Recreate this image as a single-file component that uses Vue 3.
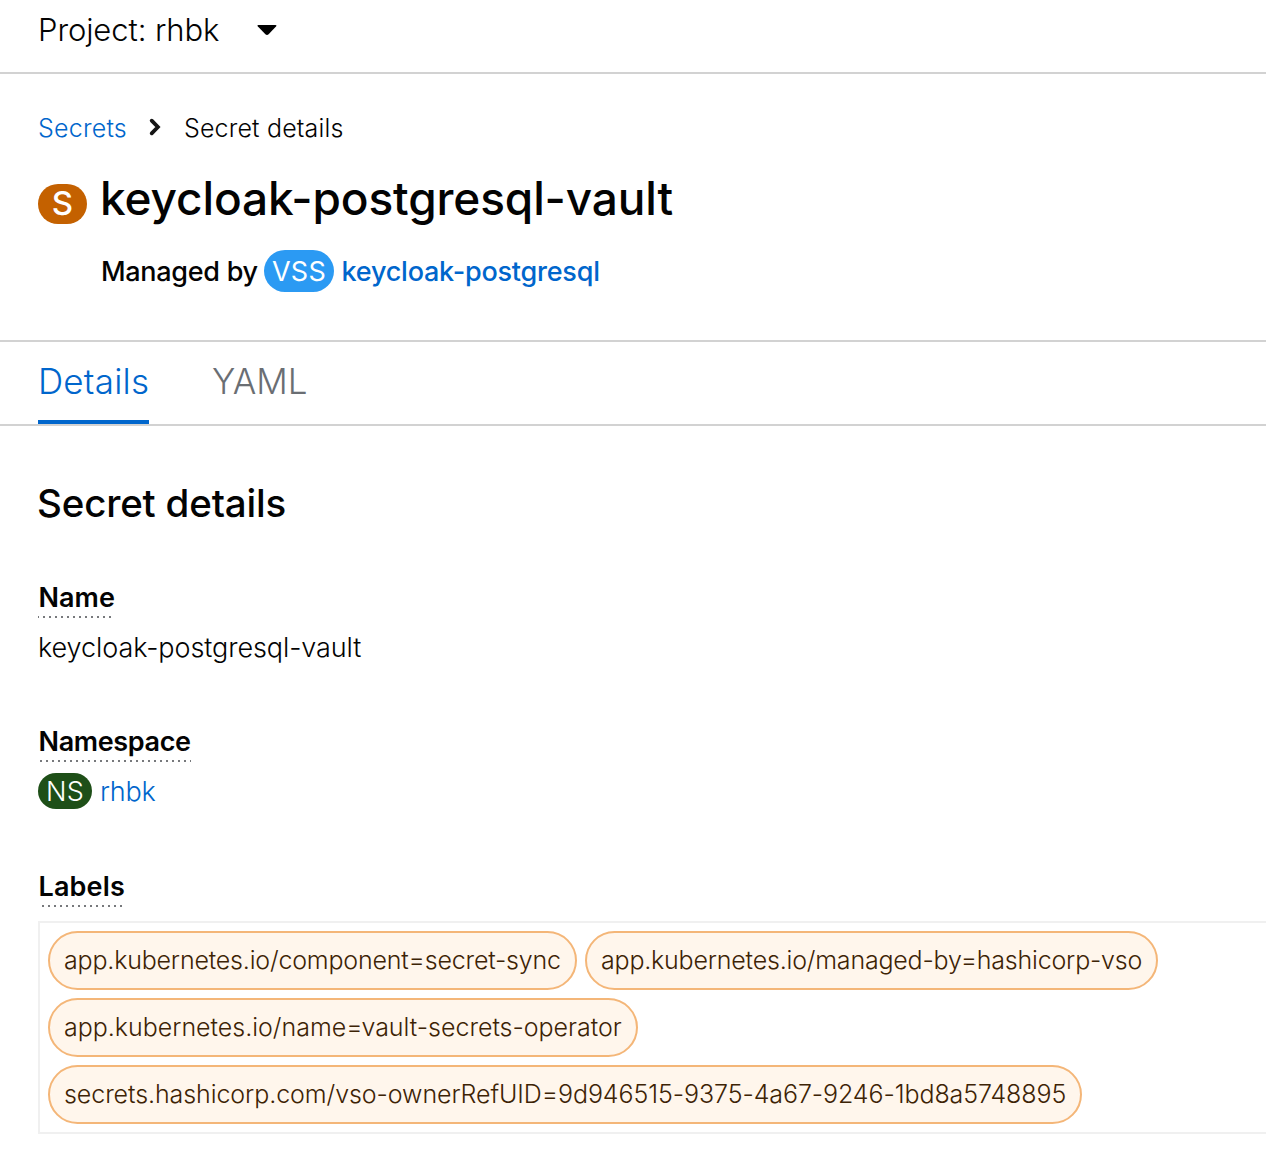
<script setup>
const labels = [
  { text: 'app.kubernetes.io/component=secret-sync', width: 529, spacing: -0.19 },
  { text: 'app.kubernetes.io/managed-by=hashicorp-vso', width: 573, spacing: -0.2 },
  { text: 'app.kubernetes.io/name=vault-secrets-operator', width: 590, spacing: -0.02 },
  { text: 'secrets.hashicorp.com/vso-ownerRefUID=9d946515-9375-4a67-9246-1bd8a5748895', width: 1034, spacing: -0.08 },
]
</script>

<template>
  <div class="page">
    <div class="project-bar">
      <span class="project-name">Project: rhbk</span>
      <svg class="caret" width="20" height="12" viewBox="0 0 20 12">
        <path d="M1.3 1 H18.5 Q20.2 1 19 2.4 L11.6 10.3 Q10 11.7 8.4 10.3 L0.9 2.4 Q-0.3 1 1.3 1Z" />
      </svg>
    </div>

    <header class="heading">
      <nav class="breadcrumb">
        <a class="crumb-link">Secrets</a>
        <svg class="chevron" width="12" height="18" viewBox="0 0 12 18">
          <path d="M2.7 2.7 L8.9 9 L2.7 15.3" />
        </svg>
        <span class="crumb-current">Secret details</span>
      </nav>
      <div class="title-row">
        <span class="badge badge-secret">S</span>
        <h1>keycloak-postgresql-vault</h1>
      </div>
      <div class="managed">
        <span class="managed-text">Managed by</span>
        <span class="badge badge-vss">VSS</span>
        <a class="managed-link">keycloak-postgresql</a>
      </div>
    </header>

    <nav class="tabs">
      <a class="tab active">Details</a>
      <a class="tab">YAML</a>
    </nav>

    <main class="content">
      <h2>Secret details</h2>
      <dl>
        <div class="group">
          <dt class="term-name">Name</dt>
          <dd class="value-name">keycloak-postgresql-vault</dd>
        </div>
        <div class="group">
          <dt class="term-namespace">Namespace</dt>
          <dd>
            <span class="badge badge-ns">NS</span>
            <a class="ns-link">rhbk</a>
          </dd>
        </div>
        <div class="group last">
          <dt class="term-labels">Labels</dt>
          <dd class="label-box">
            <span
              v-for="label in labels"
              :key="label.text"
              class="label"
              :style="{ width: label.width + 'px', letterSpacing: label.spacing + 'px' }"
            >{{ label.text }}</span>
          </dd>
        </div>
      </dl>
    </main>
  </div>
</template>

<style>
body {
  background: #fff;
  overflow: hidden;
}
</style>

<style scoped>
.page {
  height: 1162px;
  overflow: hidden;
  box-sizing: border-box;
  color: #030303;
  font-family: Inter, "Open Sans", sans-serif;
  font-weight: 300;
  white-space: nowrap;
}
h1, h2, dl, dd {
  margin: 0;
}
a {
  color: #06c;
}
.project-bar {
  display: flex;
  align-items: center;
  height: 60px;
  padding: 0 0 12px 38px;
  border-bottom: 2px solid #d2d2d2;
}
.project-name {
  width: 219px;
  padding-bottom: 2px;
  font-size: 31px;
  letter-spacing: -0.09px;
}
.heading {
  box-sizing: border-box;
  height: 268px;
  padding: 34px 0 0 38px;
  border-bottom: 2px solid #d2d2d2;
}
.breadcrumb {
  display: flex;
  align-items: center;
  height: 40px;
  font-size: 25px;
}
.crumb-link {
  width: 111px;
  letter-spacing: 0.22px;
}
.chevron {
  width: 12px;
  margin: 0 23px 2px 0;
  fill: none;
  stroke: #151515;
  stroke-width: 3.8;
  stroke-linecap: round;
}
.crumb-current {
  letter-spacing: 0.16px;
}
.badge {
  display: flex;
  flex: none;
  align-items: center;
  justify-content: center;
  color: #fff;
}
.title-row {
  display: flex;
  height: 60px;
  margin-top: 20px;
}
.badge-secret {
  width: 49px;
  height: 40px;
  margin: 16px 13px 0 0;
  border-radius: 20px;
  background: #c46100;
  font-size: 33px;
  font-weight: 500;
  line-height: 38px;
  align-items: flex-start;
}
h1 {
  font-size: 46px;
  font-weight: 500;
  line-height: 60px;
  letter-spacing: -0.13px;
}
.managed {
  display: flex;
  align-items: center;
  height: 42px;
  margin: 22px 0 0 63px;
  font-size: 27px;
  font-weight: 500;
}
.managed-text {
  width: 163px;
  letter-spacing: -0.3px;
}
.badge-vss {
  width: 70px;
  height: 42px;
  margin-right: 7.5px;
  border-radius: 21px;
  background: #2b9af3;
  font-weight: 400;
  letter-spacing: 0.3px;
}
.managed-link {
  letter-spacing: -0.22px;
}
.tabs {
  display: flex;
  gap: 63px;
  height: 82px;
  padding-left: 38px;
  border-bottom: 2px solid #d2d2d2;
  font-size: 35px;
  line-height: 78px;
}
.tab {
  box-sizing: border-box;
  height: 82px;
  color: #6a6e73;
}
.tab.active {
  width: 111px;
  border-bottom: 4px solid #06c;
  color: #06c;
  letter-spacing: 0.2px;
}
.content {
  padding: 47px 0 0 38px;
}
h2 {
  margin-left: -1px;
  font-size: 38.5px;
  font-weight: 500;
  line-height: 60px;
  letter-spacing: -0.18px;
}
dl {
  margin-top: 46px;
  font-size: 27px;
  line-height: 38px;
}
.group {
  margin-bottom: 58px;
}
.group dt {
  width: max-content;
  margin-bottom: 11px;
  padding-bottom: 1px;
  background-image: linear-gradient(90deg, #77797c 2px, transparent 2px);
  background-repeat: repeat-x;
  background-size: 6px 2px;
  font-weight: 600;
  text-indent: 0.5px;
}
dt.term-name {
  background-position: 5px 37px;
  letter-spacing: 0.05px;
}
dt.term-namespace {
  background-position: 2px 37px;
  letter-spacing: -0.36px;
}
.last {
  margin-top: 59px;
}
.group dt.term-labels {
  margin-bottom: 14px;
  background-position: 4px 37px;
  letter-spacing: 0.15px;
}
dd {
  display: flex;
  height: 36px;
}
.value-name {
  letter-spacing: -0.08px;
}
.badge-ns {
  box-sizing: border-box;
  width: 54px;
  height: 36px;
  margin-right: 8px;
  padding-top: 2px;
  border-radius: 18px;
  background: #1e4f18;
  letter-spacing: 0.3px;
}
.ns-link {
  letter-spacing: -0.21px;
}
dd.label-box {
  flex-wrap: wrap;
  gap: 8px;
  height: auto;
  padding: 8px;
  border: 2px solid #f0f0f0;
  border-right: 0;
}
.label {
  box-sizing: border-box;
  height: 59px;
  padding-left: 14px;
  border: 2px solid #f4b678;
  border-radius: 30px;
  background: #fff6ec;
  color: #3d2305;
  font-size: 25px;
  line-height: 55px;
}
</style>
